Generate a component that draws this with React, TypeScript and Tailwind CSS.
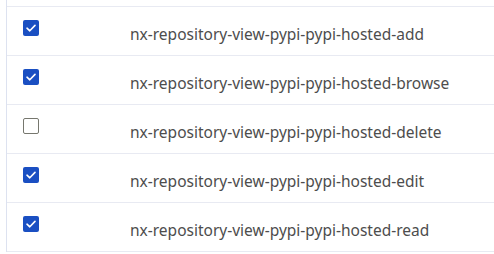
const PERMISSIONS = [
  { name: 'nx-repository-view-pypi-pypi-hosted-add', checked: true },
  { name: 'nx-repository-view-pypi-pypi-hosted-browse', checked: true },
  { name: 'nx-repository-view-pypi-pypi-hosted-delete', checked: false },
  { name: 'nx-repository-view-pypi-pypi-hosted-edit', checked: true },
  { name: 'nx-repository-view-pypi-pypi-hosted-read', checked: true }
]

const CheckBox = ({ checked }: { checked: boolean }) =>
  checked ? (
    <span className="flex h-4 w-4 items-center justify-center rounded-[2px] bg-[#1a4fc2]">
      <svg width="12" height="12" viewBox="0 0 12 12" fill="none">
        <path
          d="M2 6.2 L4.8 8.8 L10 3.4"
          stroke="white"
          strokeWidth="1.6"
          strokeLinecap="round"
          strokeLinejoin="round"
        />
      </svg>
    </span>
  ) : (
    <span className="block h-4 w-4 rounded-[2px] border border-[#76776e] bg-white" />
  )

export default function App() {
  return (
    <div className="h-[254px] w-[494px] overflow-hidden bg-white pl-[6px] font-['Noto_Sans',sans-serif]">
      <div className="border-l border-[#dde2f0] pt-[6px]">
        <div className="border-t border-[#e8eaf2]">
          {PERMISSIONS.map(p => (
            <div
              key={p.name}
              className="flex h-[49px] border-b border-[#e8eaf2]"
            >
              <div className="w-[123px] pl-[16px] pt-[13px]">
                <CheckBox checked={p.checked} />
              </div>
              <div className="pt-[17px] text-[15.5px] leading-[20px] text-[#4d4d4d]">
                {p.name}
              </div>
            </div>
          ))}
        </div>
      </div>
    </div>
  )
}
